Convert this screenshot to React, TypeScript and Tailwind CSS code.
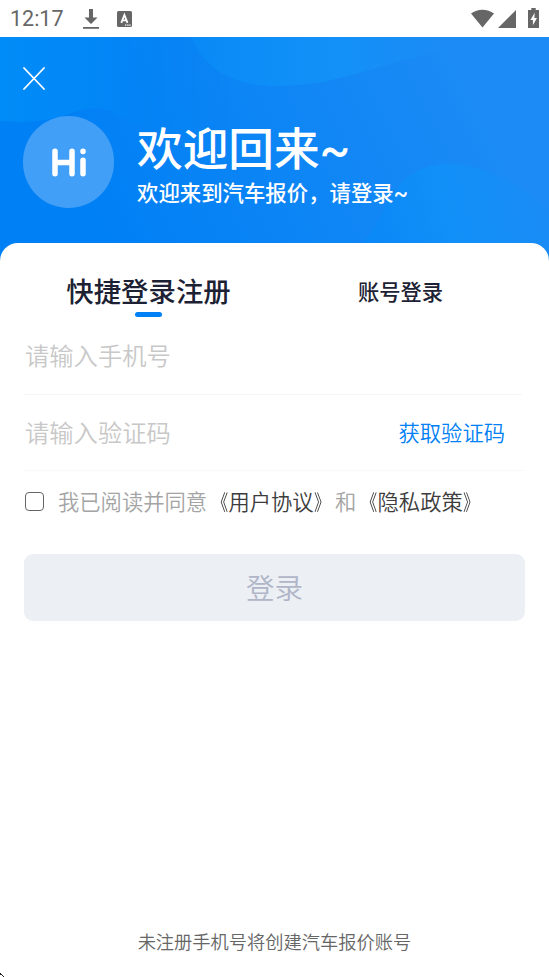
import { useState } from 'react';

function StatusBar() {
  return (
    <div className="flex h-[37px] items-center justify-between pl-[10px] pr-[10px] text-[#666]">
      <div className="flex items-center">
        <span className="w-[73px] font-[Roboto] text-[21.5px] leading-none">12:17</span>
        <svg className="h-[20px] w-[16px]" viewBox="0 0 16 20" fill="currentColor">
          <path d="M6 0h4v8.500h4.500L8 15 1.500 8.500H6z" />
          <path d="M0 18h16v1.800H0z" />
        </svg>
        <svg className="ml-[18px] h-4 w-[15px]" viewBox="0 0 15 16">
          <rect width="15" height="16" rx="1.5" fill="currentColor" />
          <path d="M4.300 11.800 7.400 4l3.100 7.800M5.300 9.400h4.200" fill="none" stroke="#fff" strokeWidth="1.8" />
          <path d="M8 13.600h1.400v1.200H8zM10.200 13.600h1.400v1.200h-1.400zM12.300 13.600h1.400v1.200h-1.400z" fill="#fff" />
        </svg>
      </div>
      <div className="flex items-center">
        <svg className="h-[19px] w-[23px]" viewBox="0 0 23 19" fill="currentColor">
          <path d="M0 4.500C6.500-.6 16.500-.6 23 4.500L11.500 18.500z" />
        </svg>
        <svg className="ml-[4px] h-[18px] w-[18px]" viewBox="0 0 18 18" fill="currentColor">
          <path d="M18 0v18H0z" />
        </svg>
        <svg className="mb-[2px] ml-[12px] h-5 w-[11px]" viewBox="0 0 11 20">
          <path d="M3.300 0h4.400v2H11v18H0V2h3.300z" fill="currentColor" />
          <path d="M6.700 4.800 2.400 12h2.500v5.300L9 9.900H6.400z" fill="#fff" />
        </svg>
      </div>
    </div>
  );
}

function HeaderWaves() {
  return (
    <svg className="absolute inset-0 h-full w-full" viewBox="0 0 549 226" preserveAspectRatio="none">
      <defs>
        <linearGradient id="base" x1="100" y1="180" x2="460" y2="0" gradientUnits="userSpaceOnUse">
          <stop offset="0" stopColor="#0080f5" />
          <stop offset="1" stopColor="#1c8bf5" />
        </linearGradient>
        <linearGradient id="left" x1="0" y1="0" x2="160" y2="0" gradientUnits="userSpaceOnUse">
          <stop offset="0" stopColor="#008cf8" />
          <stop offset="1" stopColor="#0483f5" />
        </linearGradient>
        <linearGradient id="leftFade" x1="100" y1="0" x2="230" y2="0" gradientUnits="userSpaceOnUse">
          <stop offset="0" stopColor="#fff" />
          <stop offset="1" stopColor="#000" />
        </linearGradient>
        <mask id="leftMask">
          <rect width="549" height="226" fill="url(#leftFade)" />
        </mask>
        <linearGradient id="top" x1="191" y1="0" x2="440" y2="0" gradientUnits="userSpaceOnUse">
          <stop offset="0" stopColor="#088af6" />
          <stop offset="0.6" stopColor="#1391f8" />
          <stop offset="1" stopColor="#1b8bf5" />
        </linearGradient>
        <linearGradient id="right" x1="340" y1="226" x2="549" y2="170" gradientUnits="userSpaceOnUse">
          <stop offset="0" stopColor="#0785f6" />
          <stop offset="0.55" stopColor="#1190f8" />
          <stop offset="1" stopColor="#1a8bf5" />
        </linearGradient>
      </defs>
      <rect width="549" height="226" fill="url(#base)" />
      <path d="M0 84c25 2 45 0 62-5 22-8 40-11 55-2 24 14 45 22 80 22h40V0H0z" fill="url(#left)" mask="url(#leftMask)" />
      <path d="M191 0c14 30 38 49 87 49 56 0 95-20 162-35V0z" fill="url(#top)" />
      <path d="M340 226c35-25 40-50 57-75 17-22 42-28 73-22 31 8 50 22 79 42v55z" fill="url(#right)" />
    </svg>
  );
}

function DocLink({ title }: { title: string }) {
  return (
    <a className="text-[#3c3c3c]">
      <span className="inline-block origin-right scale-x-75">《</span>
      {title}
      <span className="inline-block origin-left scale-x-75">》</span>
    </a>
  );
}

export default function App() {
  const [agreed, setAgreed] = useState(false);

  return (
    <div className="flex h-[977px] w-[549px] flex-col overflow-hidden bg-white font-['Noto_Sans_CJK_SC',sans-serif]">
      <StatusBar />

      {/* Welcome header */}
      <header className="relative -mb-5 h-[226px] shrink-0 text-white">
        <HeaderWaves />
        <div className="relative pl-[23px] pt-[30px]">
          <button className="block" aria-label="关闭">
            <svg className="h-[23px] w-[22px]" viewBox="0 0 22 23" fill="none" stroke="currentColor" strokeWidth="1.8" strokeLinecap="round">
              <path d="M1 1l20 21M21 1L1 22" />
            </svg>
          </button>
          <div className="mt-[26px] flex">
            <div className="flex h-[92px] w-[91px] items-center justify-center rounded-full bg-[#429ff7]">
              <svg className="h-[29px] w-[34px]" viewBox="0 0 34 29" fill="none" stroke="currentColor" strokeWidth="5.500" strokeLinecap="round">
                <path d="M3 3.300v22.500M20 3.300v22.500M3 14.500h17M31 12.300v13.500M31 3.300v.1" />
              </svg>
            </div>
            <div className="ml-[23px] whitespace-nowrap font-medium">
              <h1 className="mt-[7px] h-[53px] text-[45.700px] leading-[46px]">
                欢迎回来<span className="font-[Roboto]">~</span>
              </h1>
              <p className="text-[21.400px] leading-[32px]">
                欢迎来到汽车报价，请登录<span className="font-[Roboto]">~</span>
              </p>
            </div>
          </div>
        </div>
      </header>

      {/* Login form */}
      <main className="relative flex flex-1 flex-col rounded-t-[18px] bg-white px-6 font-[350]">
        <div className="flex h-[75px] items-start font-medium text-[#1c2233]">
          <button className="flex w-[249px] flex-col items-center pt-[27px] text-[27.400px] leading-[40px]">
            快捷登录注册
            <span className="mt-[2px] h-[5px] w-[27px] rounded-full bg-[#0080f5]" />
          </button>
          <button className="ml-1 w-[247px] pt-[28px] text-[21.300px] leading-[40px]">账号登录</button>
        </div>
        <div className="flex h-[77px] w-[498px] items-center border-b border-[#f6f6f6] pb-[2px]">
          <input className="w-full pl-px text-[24.300px] text-[#333] outline-none placeholder:text-[#c8c8c8]" placeholder="请输入手机号" />
        </div>
        <div className="flex h-[76px] w-[501px] items-center border-b border-[#f9f9f9] pr-[20px]">
          <input className="min-w-0 flex-1 pl-px text-[24.300px] text-[#333] outline-none placeholder:text-[#c8c8c8]" placeholder="请输入验证码" />
          <button className="mb-[1px] text-[21.300px] text-[#0080f5]">获取验证码</button>
        </div>
        <label className="mt-[14px] flex h-8 items-center whitespace-nowrap text-[21.300px] text-[#a4a4a4]">
          <input
            type="checkbox"
            checked={agreed}
            onChange={(e) => setAgreed(e.target.checked)}
            className="ml-[1px] mr-[14px] h-[19px] w-[19px] appearance-none rounded-[4px] border-[1.500px] border-[#666] checked:bg-[#0080f5]"
          />
          <span>
            我已阅读并同意
            <DocLink title="用户协议" />和<DocLink title="隐私政策" />
          </span>
        </label>
        <button className="mt-[37px] h-[67px] w-[501px] rounded-[9px] bg-[#eceff4] text-[28.500px] text-[#b0b5c8]">登录</button>
        <p className="mb-[21px] mt-auto text-center text-[18.250px] leading-[30px] text-[#666]">未注册手机号将创建汽车报价账号</p>
      </main>

      <svg className="absolute left-0 top-[973px] h-1 w-1" viewBox="0 0 4 4">
        <path d="M0 0h1v1h1v1h1v1h1v1H3V3H2V2H0z" fill="#222" />
      </svg>
    </div>
  );
}
